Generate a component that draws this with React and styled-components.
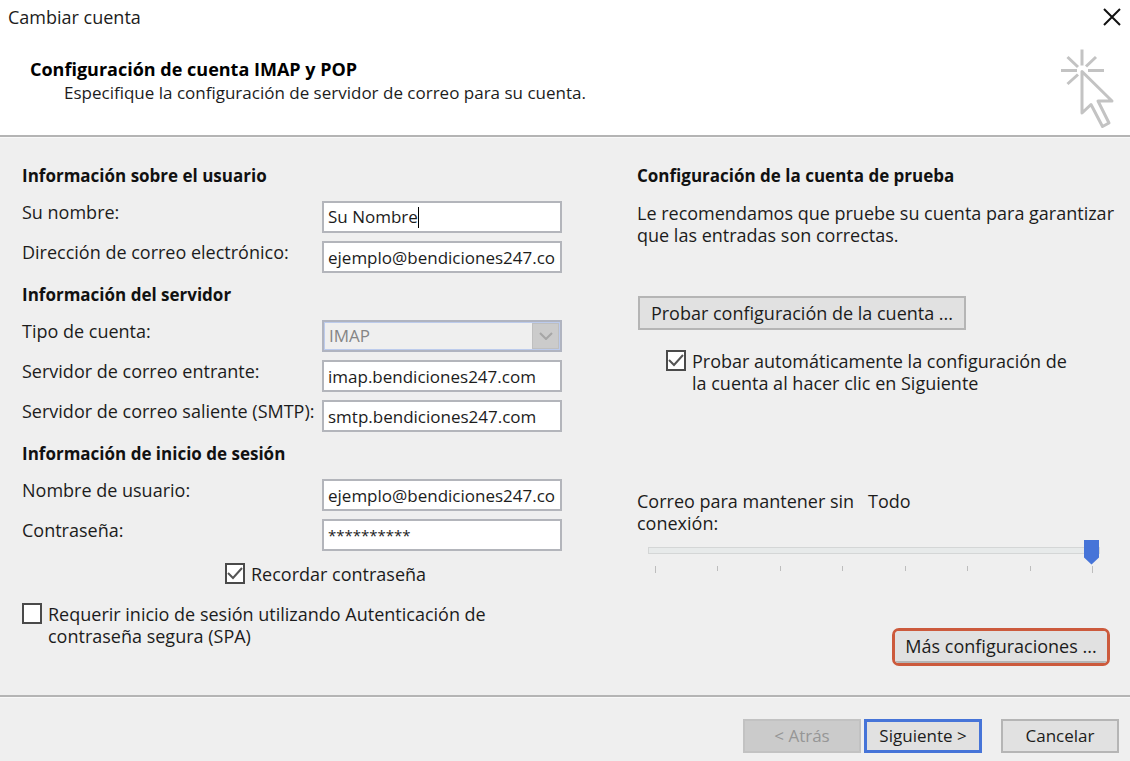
import React, { useState } from 'react'
import styled, { createGlobalStyle } from 'styled-components'

const GlobalStyle = createGlobalStyle`
  *, *::before, *::after {
    box-sizing: border-box;
  }

  body {
    margin: 0;
    background: #efefef;
    color: #1c1c1c;
    font-family: 'Open Sans', 'Noto Sans', sans-serif;
    font-size: 18px;
    line-height: 22px;
  }

  button, input, select {
    font: inherit;
    color: inherit;
  }
`

const Dialog = styled.div`
  display: flex;
  flex-direction: column;
  min-height: 100vh;
`

const Top = styled.header`
  background: #fff;
  border-bottom: 2px solid #b4b4b4;
`

const TitleBar = styled.div`
  display: flex;
  align-items: center;
  justify-content: space-between;
  height: 34px;
  padding: 0 8px;
`

const Close = styled.button`
  display: flex;
  padding: 0;
  border: none;
  background: none;
`

const Banner = styled.div`
  display: flex;
  justify-content: space-between;
  padding: 14px 16px 5px 30px;
`

const Title = styled.h1`
  margin: 10px 0 2px;
  color: #000;
  font-size: 18px;
  font-weight: 700;
  line-height: 22px;
`

const Subtitle = styled.p`
  margin: 0 0 0 34px;
  font-size: 17px;
`

const Body = styled.main`
  display: grid;
  flex: 1;
  grid-template-columns: 540fr 473fr;
  column-gap: 75px;
  padding: 28px 20px 28px 22px;
  border-top: 1px solid #f8f8f8;
`

const Column = styled.div`
  display: flex;
  flex-direction: column;
  min-width: 0;
`

const Fields = styled.section`
  display: flex;
  flex-direction: column;
  gap: 8px;
  margin-bottom: 12px;
`

const Heading = styled.h2`
  margin: 0 0 ${props => (props.$tight ? 7 : 16)}px;
  color: #111;
  font-size: 17px;
  font-weight: 700;
  line-height: 20px;
`

const Row = styled.div`
  display: grid;
  grid-template-columns: 300px minmax(0, 1fr);
`

const Label = styled.label`
  white-space: nowrap;
`

const Input = styled.input`
  width: 100%;
  height: 32px;
  padding: 0 4px;
  border: 2px solid #b3b5bb;
  border-radius: 0;
  background: #fff;
  font-size: ${props => (props.$masked ? 15 : 17)}px;
  outline: none;
`

const ActiveBox = styled.div`
  display: flex;
  align-items: center;
  height: 32px;
  padding-left: 4px;
  border: 2px solid #b3b5bb;
  background: #fff;
`

const ActiveInput = styled.input`
  field-sizing: content;
  padding: 0;
  border: none;
  background: none;
  font-size: 17px;
  outline: none;
  caret-color: transparent;
`

const Caret = styled.span`
  width: 1px;
  height: 21px;
  background: #000;
`

const SelectBox = styled.div`
  display: grid;
  align-items: center;
  height: 32px;
  border: 2px solid #b0b4c0;
  background: #efefef;
  box-shadow: inset 0 0 0 1px #bccbec;
`

const Select = styled.select`
  grid-area: 1 / 1;
  width: 100%;
  padding: 0 5px;
  border: none;
  background: none;
  font-size: 17px;
  appearance: none;

  &:disabled {
    color: #858585;
    opacity: 1;
  }
`

const Arrow = styled.span`
  display: flex;
  grid-area: 1 / 1;
  align-items: center;
  justify-content: center;
  justify-self: end;
  width: 27px;
  height: 26px;
  margin-right: 1px;
  border: 1px solid #bfbfbf;
  background: #cbcbcb;
`

const Check = styled.label`
  display: flex;
  gap: 6px;
  margin-top: ${props => props.$top || 0}px;
  margin-left: ${props => props.$indent || 0}px;
`

const Tick = styled.span`
  display: grid;
  flex: none;
  width: 20px;
  height: 21px;

  svg {
    grid-area: 1 / 1;
    pointer-events: none;
  }
`

const TickInput = styled.input`
  grid-area: 1 / 1;
  width: 20px;
  height: 21px;
  margin: 0;
  border: 2px solid #4a4a4a;
  background: #fff;
  appearance: none;
`

const Text = styled.p`
  margin: 0;
  white-space: nowrap;
`

const Button = styled.button`
  min-width: ${props => props.$width || 118}px;
  height: 34px;
  padding: 0 10px;
  border: 2px solid #b5b5b5;
  background: #e1e1e1;

  &:disabled {
    border-color: #c2c2c2;
    background: #cbcbcb;
    color: #969696;
  }
`

const TestButton = styled(Button)`
  align-self: flex-start;
  margin: 50px 0 20px 1px;
`

const PrimaryButton = styled(Button)`
  border: 3px solid #4674d8;
`

const Offline = styled.div`
  display: flex;
  gap: 14px;
  margin-top: 96px;
`

const Slider = styled.div`
  margin: 3px 10px 0 11px;
`

const Range = styled.input`
  display: block;
  width: 100%;
  height: 26px;
  margin: 0;
  background: none;
  appearance: none;

  &::-webkit-slider-runnable-track {
    height: 7px;
    border: 1px solid #d4d6d6;
    background: #e7eaea;
  }

  &::-webkit-slider-thumb {
    width: 15px;
    height: 25px;
    margin-top: -8px;
    background: #4674d8;
    clip-path: polygon(0 0, 100% 0, 100% 72%, 50% 100%, 0 72%);
    appearance: none;
  }
`

const Marks = styled.div`
  display: flex;
  justify-content: space-between;
  padding: 3px 7px 0;

  span {
    width: 1px;
    height: 5px;
    background: #bdbdbd;
  }

  span:first-child, span:last-child {
    height: 7px;
  }
`

const Highlight = styled.div`
  align-self: flex-end;
  margin-top: 55px;
  border: 3px solid #cc5a3c;
  border-radius: 7px;
  background: #efefef;
  overflow: hidden;
`

const MoreButton = styled(Button)`
  display: block;
  height: 32px;
  padding: 0 9px;
  border-width: 0 0 2px;
`

const Footer = styled.footer`
  display: flex;
  justify-content: flex-end;
  padding: 22px 11px 8px;
  border-top: 2px solid #b4b4b4;
  box-shadow: inset 0 1px #f8f8f8;
  font-size: 17px;
`

const Steps = styled.div`
  display: flex;
  gap: 3px;
  margin-right: 19px;
`

const CursorIcon = () => (
  <svg width="54" height="82" viewBox="0 0 54 82" fill="none" stroke="#c3c3c3" strokeWidth="3">
    <path d="M22 1.500v16M1 22.500h16M28 22.500h16M7.500 9l10.500 10M36 9L26 18.500M7.500 36l10.500-9.500" />
    <path d="M22 23.500V65l9-8.500 11.500 22 6.500-3.500-11-22h14z" strokeLinejoin="round" />
  </svg>
)

const Checkbox = ({ children, defaultChecked, ...rest }) => {
  const [checked, setChecked] = useState(!!defaultChecked)

  return (
    <Check {...rest}>
      <Tick>
        <TickInput
          type="checkbox"
          checked={checked}
          onChange={event => setChecked(event.target.checked)}
        />
        {checked && (
          <svg width="20" height="21" fill="none" stroke="#555" strokeWidth="2">
            <path d="M3 10l5 5 9-10" />
          </svg>
        )}
      </Tick>
      <span>{children}</span>
    </Check>
  )
}

const Field = ({ id, label, value, masked }) => (
  <Row>
    <Label htmlFor={id}>{label}</Label>
    <Input id={id} type="text" defaultValue={value} $masked={masked} />
  </Row>
)

const App = () => (
  <Dialog>
    <GlobalStyle />
    <Top>
      <TitleBar>
        <span>Cambiar cuenta</span>
        <Close aria-label="Cerrar">
          <svg width="20" height="20" fill="none" stroke="#111" strokeWidth="2">
            <path d="M2 2l16 16M18 2L2 18" />
          </svg>
        </Close>
      </TitleBar>
      <Banner>
        <div>
          <Title>Configuración de cuenta IMAP y POP</Title>
          <Subtitle>Especifique la configuración de servidor de correo para su cuenta.</Subtitle>
        </div>
        <CursorIcon />
      </Banner>
    </Top>

    <Body>
      <Column>
        <Fields>
          <Heading $tight>Información sobre el usuario</Heading>
          <Row>
            <Label htmlFor="name">Su nombre:</Label>
            <ActiveBox>
              <ActiveInput id="name" type="text" defaultValue="Su Nombre" />
              <Caret />
            </ActiveBox>
          </Row>
          <Field id="email" label="Dirección de correo electrónico:" value="ejemplo@bendiciones247.com" />
        </Fields>

        <Fields>
          <Heading $tight>Información del servidor</Heading>
          <Row>
            <Label htmlFor="type">Tipo de cuenta:</Label>
            <SelectBox>
              <Select id="type" disabled>
                <option>IMAP</option>
              </Select>
              <Arrow>
                <svg width="14" height="8" fill="none" stroke="#a6a6a6" strokeWidth="2">
                  <path d="M1 1l6 6 6-6" />
                </svg>
              </Arrow>
            </SelectBox>
          </Row>
          <Field id="incoming" label="Servidor de correo entrante:" value="imap.bendiciones247.com" />
          <Field id="outgoing" label="Servidor de correo saliente (SMTP):" value="smtp.bendiciones247.com" />
        </Fields>

        <Fields>
          <Heading $tight>Información de inicio de sesión</Heading>
          <Field id="user" label="Nombre de usuario:" value="ejemplo@bendiciones247.com" />
          <Field id="password" label="Contraseña:" value="**********" masked />
        </Fields>

        <Checkbox defaultChecked $indent={203}>
          Recordar contraseña
        </Checkbox>
        <Checkbox $top={18}>
          Requerir inicio de sesión utilizando Autenticación de
          <br />
          contraseña segura (SPA)
        </Checkbox>
      </Column>

      <Column>
        <Heading>Configuración de la cuenta de prueba</Heading>
        <Text>
          Le recomendamos que pruebe su cuenta para garantizar
          <br />
          que las entradas son correctas.
        </Text>
        <TestButton $width={328}>Probar configuración de la cuenta ...</TestButton>
        <Checkbox defaultChecked $indent={29}>
          Probar automáticamente la configuración de
          <br />
          la cuenta al hacer clic en Siguiente
        </Checkbox>
        <Offline>
          <label htmlFor="offline">
            Correo para mantener sin
            <br />
            conexión:
          </label>
          <output htmlFor="offline">Todo</output>
        </Offline>
        <Slider>
          <Range id="offline" type="range" min="0" max="7" defaultValue="7" />
          <Marks>
            {[0, 1, 2, 3, 4, 5, 6, 7].map(mark => (
              <span key={mark} />
            ))}
          </Marks>
        </Slider>
        <Highlight>
          <MoreButton $width={212}>Más configuraciones ...</MoreButton>
        </Highlight>
      </Column>
    </Body>

    <Footer>
      <Steps>
        <Button disabled>&lt; Atrás</Button>
        <PrimaryButton>Siguiente &gt;</PrimaryButton>
      </Steps>
      <Button>Cancelar</Button>
    </Footer>
  </Dialog>
)

export default App
